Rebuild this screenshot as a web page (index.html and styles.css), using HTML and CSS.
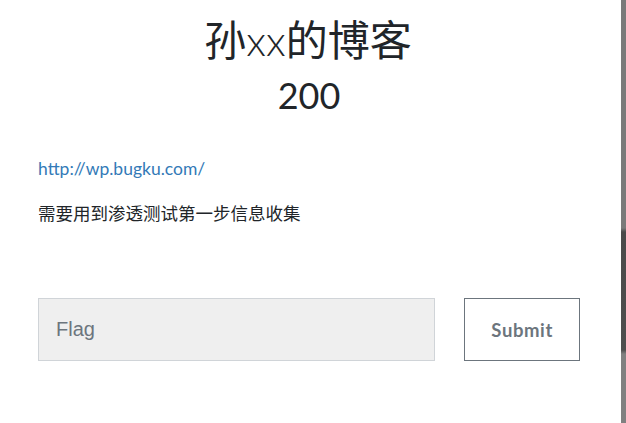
FILE: index.html
```html
<!DOCTYPE html>
<html>
<head>
<meta charset="utf-8">
<link rel="stylesheet" href="styles.css">
</head>
<body>
<div class="modal">
  <h1 class="title">孙<span class="latin">xx</span>的博客</h1>
  <h2 class="score">200</h2>
  <p class="link"><a href="#">http://wp.bugku.com/</a></p>
  <p class="desc">需要用到渗透测试第一步信息收集</p>
  <form class="flag-form">
    <input class="flag-input" type="text" placeholder="Flag">
    <button class="submit" type="button">Submit</button>
  </form>
</div>
<div class="edge"></div>
</body>
</html>
```
FILE: styles.css
```css
html, body {
  margin: 0;
  padding: 0;
  background: #fff;
}
body {
  width: 626px;
  height: 423px;
  overflow: hidden;
  position: relative;
  font-family: Lato, "Noto Sans CJK SC", sans-serif;
  color: #212529;
}
.modal {
  width: 621px;
  box-sizing: border-box;
  padding: 14px 41px 0 38px;
}
.title {
  margin: 0;
  text-align: center;
  font-weight: 400;
  font-size: 42px;
  line-height: 52px;
  padding-right: 2px;
}
.latin {
  font-weight: 300;
}
.score {
  margin: 8px 0 0;
  text-align: center;
  font-weight: 400;
  font-size: 36px;
  line-height: 42px;
}
.link {
  margin: 41px 0 0;
  font-size: 17.5px;
  line-height: 24px;
}
.link a {
  color: #337ab7;
  text-decoration: none;
}
.desc {
  margin: 21px 0 0;
  font-size: 17.5px;
  line-height: 24px;
  color: #212529;
}
.flag-form {
  margin-top: 72px;
  display: flex;
  gap: 29px;
}
.flag-input {
  width: 398px;
  height: 63px;
  box-sizing: border-box;
  border: 1px solid #d0d4d8;
  background: #efefef;
  padding: 0 17px;
  font-family: "Liberation Sans", Arial, sans-serif;
  font-size: 20px;
  color: #495057;
  outline: none;
  border-radius: 0;
}
.flag-input::placeholder {
  color: #6c757d;
}
.submit {
  width: 116px;
  height: 63px;
  box-sizing: border-box;
  border: 1px solid #6c757d;
  background: #fff;
  color: #6c757d;
  font-family: Lato, sans-serif;
  font-weight: 700;
  font-size: 18.5px;
  letter-spacing: 0.6px;
  border-radius: 0;
}
.edge {
  position: absolute;
  top: 0;
  right: 0;
  width: 5px;
  height: 423px;
  background: linear-gradient(to bottom, #7a7a7a 0, #7a7a7a 228px, #4a4a4a 232px, #4e4e4e 350px, #808080 354px, #808080 100%);
}
```
